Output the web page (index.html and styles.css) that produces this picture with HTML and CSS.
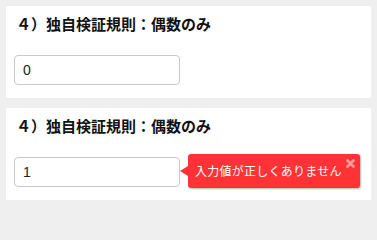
FILE: index.html
```html
<!DOCTYPE html>
<html lang="ja">
<head>
<meta charset="utf-8">
<link rel="stylesheet" href="styles.css">
</head>
<body>
<section class="card">
  <h2 class="title">４）独自検証規則：偶数のみ</h2>
  <div class="field">
    <input class="input" type="text" value="0">
  </div>
</section>
<section class="card card-second">
  <h2 class="title">４）独自検証規則：偶数のみ</h2>
  <div class="field">
    <input class="input" type="text" value="1">
    <div class="tip">
      <span class="tip-text">入力値が正しくありません</span>
      <svg class="tip-close" width="9" height="9" viewBox="0 0 9 9"><path d="M1.5 1.5 L7.5 7.5 M7.5 1.5 L1.5 7.5" stroke="#ff9d9d" stroke-width="2.6" stroke-linecap="round"/></svg>
    </div>
  </div>
</section>
</body>
</html>
```
FILE: styles.css
```css
html, body {
  margin: 0;
  padding: 0;
}
body {
  background: #efefef;
  padding: 6px;
  font-family: "Noto Sans CJK JP", "Liberation Sans", sans-serif;
}
.card {
  background: #ffffff;
  padding: 8px 8px 13px 8px;
}
.card-second {
  margin-top: 10px;
}
.title {
  margin: 0;
  padding-left: 2px;
  font-size: 15px;
  line-height: 19px;
  font-weight: bold;
  color: #111;
}
.field {
  position: relative;
  margin-top: 22px;
  width: 166px;
  height: 30px;
}
.input {
  box-sizing: border-box;
  width: 166px;
  height: 30px;
  margin: 0;
  padding: 0 8px;
  border: 1px solid #c8c8c8;
  border-radius: 4px;
  font-family: "Liberation Sans", Arial, sans-serif;
  font-size: 14px;
  color: #222;
  background: #fff;
  outline: none;
}
.tip {
  position: absolute;
  left: 174px;
  top: -3px;
  box-sizing: border-box;
  width: 172px;
  height: 34px;
  padding: 8px 18px 8px 7px;
  background: #ff3236;
  border-radius: 3px;
  box-shadow: 1px 1px 2px rgba(0, 0, 0, 0.3);
  color: #ffffff;
  white-space: nowrap;
}
.tip::before {
  content: "";
  position: absolute;
  left: -8px;
  top: 12px;
  border-top: 5px solid transparent;
  border-bottom: 5px solid transparent;
  border-right: 8px solid #ff3236;
}
.tip-text {
  display: block;
  font-size: 12px;
  line-height: 18px;
  letter-spacing: 0.25px;
}
.tip-close {
  position: absolute;
  right: 5px;
  top: 5px;
}
```
